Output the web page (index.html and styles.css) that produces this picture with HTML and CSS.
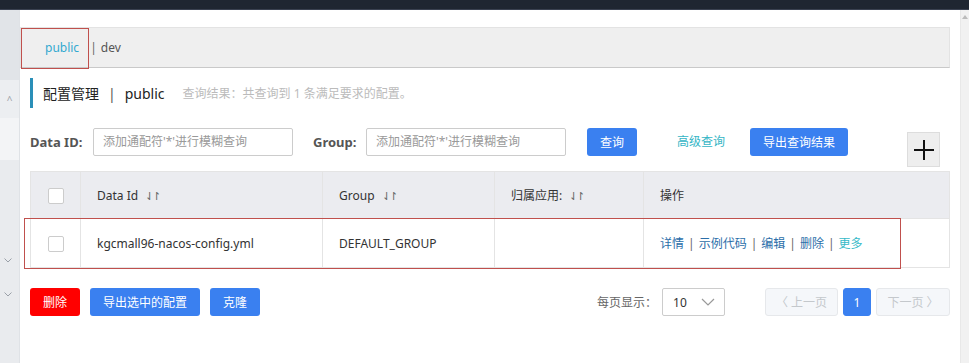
FILE: index.html
```html
<!DOCTYPE html>
<html lang="zh">
<head>
<meta charset="utf-8">
<title>配置管理</title>
<link rel="stylesheet" href="styles.css">
</head>
<body>
<div class="topbar"></div>
<div class="frame">
  <aside class="sidebar">
    <div class="sb-a"></div>
    <div class="sb-b"><span class="caret">^</span></div>
    <div class="sb-c"></div>
    <div class="sb-d">
      <span class="chev chev1"><svg width="8" height="5" viewBox="0 0 8 5"><path d="M0.5 0.5 L4 4 L7.5 0.5" fill="none" stroke="#9aa0a8" stroke-width="1"/></svg></span>
      <span class="chev chev2"><svg width="8" height="5" viewBox="0 0 8 5"><path d="M0.5 0.5 L4 4 L7.5 0.5" fill="none" stroke="#9aa0a8" stroke-width="1"/></svg></span>
    </div>
  </aside>
  <main class="content">
    <div class="ns-bar">
      <span class="ns-item ns-active">public</span>
      <span class="ns-sep">|</span>
      <span class="ns-item">dev</span>
      <div class="mark mark-ns"></div>
    </div>
    <div class="title-row">
      <span class="title-bar"></span>
      <span class="title">配置管理</span>
      <span class="title-sep">|</span>
      <span class="title">public</span>
      <span class="title-info">查询结果：共查询到 1 条满足要求的配置。</span>
    </div>
    <div class="search-row">
      <label class="lbl">Data ID:</label>
      <div class="input">添加通配符'*'进行模糊查询</div>
      <label class="lbl lbl-group">Group:</label>
      <div class="input">添加通配符'*'进行模糊查询</div>
      <button class="btn btn-primary btn-query">查询</button>
      <a class="link-adv">高级查询</a>
      <button class="btn btn-primary btn-export">导出查询结果</button>
      <button class="btn-plus"><svg width="22" height="22" viewBox="0 0 22 22"><path d="M11 1 V21 M1 11 H21" stroke="#111" stroke-width="2"/></svg></button>
    </div>
    <div class="table-wrap">
      <table class="table">
        <colgroup>
          <col style="width:50px"><col style="width:242px"><col style="width:172px"><col style="width:149px"><col>
        </colgroup>
        <thead>
          <tr>
            <th class="cb-cell"><span class="cb"></span></th>
            <th>Data Id <span class="sort">⇃↾</span></th>
            <th>Group <span class="sort">⇃↾</span></th>
            <th>归属应用: <span class="sort">⇃↾</span></th>
            <th>操作</th>
          </tr>
        </thead>
        <tbody>
          <tr>
            <td class="cb-cell"><span class="cb"></span></td>
            <td>kgcmall96-nacos-config.yml</td>
            <td>DEFAULT_GROUP</td>
            <td></td>
            <td class="ops"><a>详情</a><span class="op-sep">|</span><a>示例代码</a><span class="op-sep">|</span><a>编辑</a><span class="op-sep">|</span><a>删除</a><span class="op-sep">|</span><a class="more">更多</a></td>
          </tr>
        </tbody>
      </table>
      <div class="mark mark-row"></div>
    </div>
    <div class="footer-row">
      <button class="btn btn-danger">删除</button>
      <button class="btn btn-primary btn-exp-sel">导出选中的配置</button>
      <button class="btn btn-primary btn-clone">克隆</button>
      <span class="page-lbl">每页显示：</span>
      <div class="select"><span>10</span><svg width="14" height="8" viewBox="0 0 14 8"><path d="M1 1 L7 7 L13 1" fill="none" stroke="#999" stroke-width="1.2"/></svg></div>
      <button class="pg pg-prev">〈 上一页</button>
      <button class="pg pg-cur">1</button>
      <button class="pg pg-next">下一页 〉</button>
    </div>
  </main>
  <div class="scrollbar"><span class="sc-arrow"></span></div>
</div>
</body>
</html>
```

FILE: styles.css
```css
* { box-sizing: border-box; }
html, body { margin: 0; padding: 0; }
body {
  width: 969px;
  height: 363px;
  overflow: hidden;
  background: #fff;
  font-family: "Noto Sans", "Noto Sans CJK SC", sans-serif;
  font-size: 12px;
  color: #333;
}
.topbar {
  height: 10px;
  background: #1f2631;
  border-bottom: 1px solid #3a4150;
}
.frame {
  display: flex;
  height: 353px;
}
.sidebar {
  width: 20px;
  display: flex;
  flex-direction: column;
  background: #e9ebee;
  border-right: 1px solid #dfe2e6;
}
.sb-a { height: 70px; background: #e1e4e8; }
.sb-b { height: 38px; background: #eceef1; display: flex; align-items: center; justify-content: center; }
.sb-c { height: 42px; background: #f3f4f6; }
.sb-d { flex: 1; position: relative; }
.caret { color: #9aa0a8; font-size: 10px; line-height: 1; margin-top: 2px; }
.chev { position: absolute; left: 4px; }
.chev1 { top: 90px; }
.chev2 { top: 124px; }

.content {
  flex: 1;
  position: relative;
}
.scrollbar {
  width: 9px;
  background: #f1f1f1;
  border-left: 1px solid #e8e8e8;
  position: relative;
}
.sc-arrow {
  position: absolute;
  top: 5px; left: 1px;
  width: 0; height: 0;
  border-left: 3px solid transparent;
  border-right: 3px solid transparent;
  border-bottom: 4px solid #bbb;
}

.ns-bar {
  position: relative;
  margin: 17px 10px 0 0;
  height: 41px;
  background: #efefef;
  border: 1px solid #e3e3e3;
  border-bottom: 1px solid #c9c9c9;
  display: flex;
  align-items: center;
  padding-left: 24px;
  font-size: 12px;
}
.ns-item { color: #555; }
.ns-active { color: #33a9d0; }
.ns-sep { color: #666; margin: 0 4px 0 11px; }
.mark {
  position: absolute;
  border: 1px solid #c0504d;
  pointer-events: none;
}
.mark-ns { left: 0; top: 0; width: 68px; height: 41px; }

.title-row {
  display: flex;
  align-items: center;
  margin-top: 10px;
  padding-left: 10px;
  height: 30px;
}
.title-bar {
  width: 3px;
  height: 30px;
  background: #2a8fb8;
  margin-right: 10px;
}
.title { font-size: 14px; color: #222; }
.title-sep { font-size: 14px; color: #555; margin: 0 9px; }
.title-info { font-size: 12px; color: #bbb; margin-left: 18px; }

.search-row {
  display: flex;
  align-items: flex-start;
  margin-top: 20px;
  padding-left: 10px;
  height: 39px;
}
.lbl {
  font-size: 13px;
  font-weight: bold;
  color: #555;
  line-height: 28px;
  width: 63px;
}
.lbl-group { width: 53px; margin-left: 20px; }
.input {
  width: 200px;
  height: 28px;
  border: 1px solid #ccc;
  border-radius: 2px;
  color: #999;
  font-size: 12px;
  line-height: 26px;
  padding-left: 9px;
}
.btn {
  height: 28px;
  border: none;
  border-radius: 3px;
  color: #fff;
  font-family: inherit;
  font-size: 12px;
  padding: 0;
}
.btn-primary { background: #3a80f0; }
.btn-danger { background: #f00; width: 50px; }
.btn-query { width: 50px; margin-left: 21px; }
.link-adv { color: #34b5c5; font-size: 12px; line-height: 28px; margin-left: 40px; }
.btn-export { width: 98px; margin-left: 25px; }
.btn-plus {
  width: 33px;
  height: 35px;
  margin: 4px 20px 0 auto;
  background: #eee;
  border: 1px solid #ddd;
  display: flex;
  align-items: center;
  justify-content: center;
  padding: 0;
}

.table-wrap {
  position: relative;
  margin: 4px 10px 0 10px;
}
.table {
  width: 920px;
  border-collapse: collapse;
  table-layout: fixed;
}
.table th, .table td {
  border: 1px solid #e4e4e4;
  text-align: left;
  font-weight: normal;
  font-size: 12px;
  padding: 0 0 0 16px;
}
.table th { background: #ebecf0; height: 47px; color: #333; }
.table td { height: 49px; background: #fff; color: #333; }
.table .cb-cell { padding: 0; text-align: center; }
.cb {
  display: inline-block;
  width: 16px; height: 16px;
  border: 1px solid #ccc;
  border-radius: 2px;
  background: #fff;
  vertical-align: middle;
}
.sort { color: #666; font-size: 11px; margin-left: 4px; letter-spacing: -2px; }
.ops a { color: #2b6ea9; }
.ops a.more { color: #36bac8; }
.op-sep { color: #666; margin: 0 4px; }
.mark-row { left: -6px; top: 47px; width: 877px; height: 51px; }

.footer-row {
  display: flex;
  align-items: center;
  margin-top: 20px;
  padding-left: 10px;
  height: 28px;
}
.btn-exp-sel { width: 110px; margin-left: 10px; }
.btn-clone { width: 50px; margin-left: 10px; }
.page-lbl { color: #666; font-size: 12px; margin-left: 337px; }
.select {
  width: 63px;
  height: 28px;
  border: 1px solid #ccc;
  border-radius: 2px;
  margin-left: 5px;
  display: flex;
  align-items: center;
  justify-content: space-between;
  padding: 0 9px 0 10px;
  font-size: 12px;
  color: #333;
}
.pg {
  height: 28px;
  border: 1px solid #e6e8eb;
  border-radius: 3px;
  background: #f5f7fa;
  color: #c4c8cc;
  font-family: inherit;
  font-size: 12px;
  padding: 0;
}
.pg-prev { width: 73px; margin-left: 40px; }
.pg-cur { width: 28px; margin-left: 5px; background: #3a80f0; border-color: #3a80f0; color: #fff; }
.pg-next { width: 74px; margin-left: 5px; }
```
